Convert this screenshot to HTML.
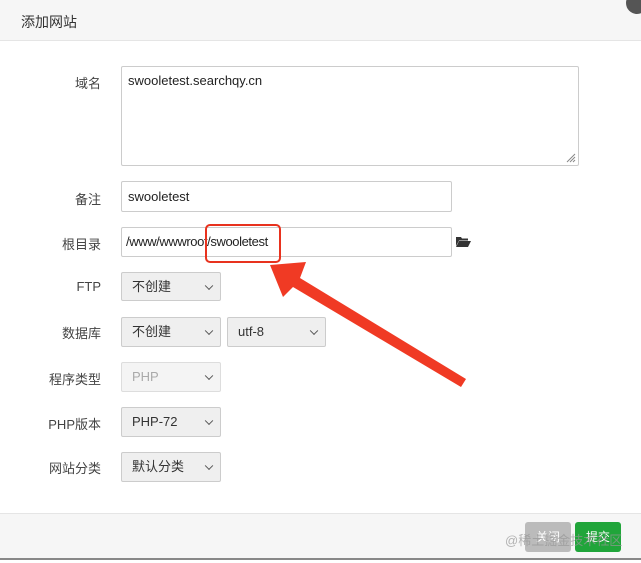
<!DOCTYPE html>
<html><head><meta charset="utf-8"><style>
*{box-sizing:border-box;margin:0;padding:0}
body{width:641px;height:563px;background:#fff;font-family:"Liberation Sans","Noto Sans CJK SC",sans-serif;font-size:13px;color:#333;position:relative;overflow:hidden}
.hd{position:absolute;left:0;top:0;width:641px;height:41px;background:#f6f6f6;border-bottom:1px solid #e5e5e5}
.hd span{position:absolute;left:21px;top:12px;font-size:14px;color:#333}
.close{position:absolute;left:626px;top:-8px;width:22px;height:22px;border-radius:50%;background:#555}
.lb{position:absolute;width:101px;text-align:right;font-size:13px;color:#444}
.in{position:absolute;border:1px solid #ccc;border-radius:2px;background:#fff;padding-left:6px;font-size:13px;color:#222}
.sel{position:absolute;border:1px solid #ccc;border-radius:2px;background:#efefef;padding-left:10px;font-size:13px;color:#333}
.sel:after{content:"";position:absolute;right:8px;top:50%;width:5px;height:5px;border-right:1.3px solid #555;border-bottom:1.3px solid #555;transform:translateY(-70%) rotate(45deg)}
.ft{position:absolute;left:0;top:513px;width:641px;height:47px;background:#f6f6f6;border-top:1px solid #e5e5e5;border-bottom:2px solid #888}
.btn{position:absolute;top:522px;width:46px;height:30px;border-radius:3px;color:#fff;font-size:12px;text-align:center;line-height:30px}
</style></head><body>
<div class="hd"><span>添加网站</span></div>
<div class="close"></div>

<div class="lb" style="top:73px">域名</div>
<div class="in" style="left:121px;top:66px;width:458px;height:100px;padding-top:6px">swooletest.searchqy.cn
<svg style="position:absolute;right:2px;bottom:2px" width="10" height="10"><path d="M9 1L1 9M9 4L4 9M9 7L7 9" stroke="#888" stroke-width="1"/></svg></div>

<div class="lb" style="top:189px">备注</div>
<div class="in" style="left:121px;top:181px;width:331px;height:31px;line-height:29px">swooletest</div>

<div class="lb" style="top:234px">根目录</div>
<div class="in" style="left:121px;top:227px;width:331px;height:30px;line-height:28px;padding-left:4px;letter-spacing:-0.4px">/www/wwwroot/swooletest</div>
<svg style="position:absolute;left:456px;top:236px" width="15" height="11"><path d="M0 1h5l1 1.5h6v2H3L0 10z" fill="#333"/><path d="M3 5h12l-3 6H0z" fill="#333"/></svg>

<div class="lb" style="top:279px">FTP</div>
<div class="sel" style="left:121px;top:272px;width:100px;height:29px;line-height:27px">不创建</div>

<div class="lb" style="top:323px">数据库</div>
<div class="sel" style="left:121px;top:317px;width:100px;height:30px;line-height:28px">不创建</div>
<div class="sel" style="left:227px;top:317px;width:99px;height:30px;line-height:28px">utf-8</div>

<div class="lb" style="top:369px">程序类型</div>
<div class="sel" style="left:121px;top:362px;width:100px;height:30px;line-height:28px;background:#f4f4f4;color:#aaa;border-color:#ddd">PHP</div>

<div class="lb" style="top:414px">PHP版本</div>
<div class="sel" style="left:121px;top:407px;width:100px;height:30px;line-height:28px">PHP-72</div>

<div class="lb" style="top:458px">网站分类</div>
<div class="sel" style="left:121px;top:452px;width:100px;height:30px;line-height:28px">默认分类</div>

<div style="position:absolute;left:205px;top:224px;width:76px;height:39px;border:2px solid #e8321e;border-radius:5px"></div>
<svg style="position:absolute;left:0;top:0" width="641" height="563"><path d="M466 379L300 278L306 262L270 265L283 297L293 287L461 387Z" fill="#f03a24"/></svg>

<div class="ft"></div>
<div class="btn" style="left:525px;background:#bbb">关闭</div>
<div class="btn" style="left:575px;background:#20a53a">提交</div>
<div style="position:absolute;left:505px;top:530px;font-size:13px;color:rgba(150,150,150,.7)">@稀土掘金技术社区</div>
</body></html>
